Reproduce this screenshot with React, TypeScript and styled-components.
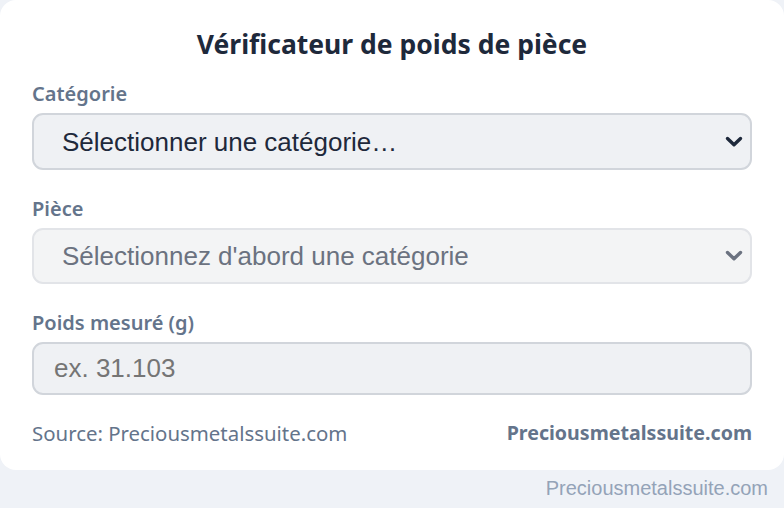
import styled, { createGlobalStyle } from 'styled-components';

const GlobalStyle = createGlobalStyle`
  html, body {
    margin: 0;
    padding: 0;
    background: #eff2f7;
  }
  * {
    box-sizing: border-box;
  }
`;

const Chevron: React.FC<{ muted?: boolean }> = ({ muted }) => (
  <ChevronIcon viewBox='0 0 18 12' width={18} height={12}>
    <path
      d='M2.5 2.5 L9 8.8 L15.5 2.5'
      fill='none'
      stroke={muted ? '#6b7280' : '#1e293b'}
      strokeWidth={3.4}
      strokeLinecap='round'
      strokeLinejoin='round'
    />
  </ChevronIcon>
);

const App: React.FC = () => {
  return (
    <>
      <GlobalStyle />
      <Page>
        <Card>
          <Title>Vérificateur de poids de pièce</Title>
          <Field>
            <Label>Catégorie</Label>
            <SelectWrap>
              <Select defaultValue=''>
                <option value=''>Sélectionner une catégorie…</option>
              </Select>
              <Chevron />
            </SelectWrap>
          </Field>
          <Field>
            <Label>Pièce</Label>
            <SelectWrap>
              <Select disabled defaultValue=''>
                <option value=''>Sélectionnez d'abord une catégorie</option>
              </Select>
              <Chevron muted />
            </SelectWrap>
          </Field>
          <Field>
            <Label>Poids mesuré (g)</Label>
            <Input type='text' placeholder='ex. 31.103' />
          </Field>
          <Footer>
            <Source>Source: Preciousmetalssuite.com</Source>
            <Brand>Preciousmetalssuite.com</Brand>
          </Footer>
        </Card>
        <Credit>Preciousmetalssuite.com</Credit>
      </Page>
    </>
  );
};

export default App;

const Page = styled.div`
  width: 784px;
  min-height: 508px;
  display: flex;
  flex-direction: column;
`;

const Card = styled.div`
  background: #ffffff;
  border-radius: 16px;
  padding: 28px 32px 25px;
  display: flex;
  flex-direction: column;
  gap: 26px;
`;

const Title = styled.h1`
  margin: 0 0 -4px;
  font-family: 'Noto Sans', sans-serif;
  font-weight: 700;
  font-size: 26.5px;
  line-height: 32px;
  color: #1e293b;
  text-align: center;
`;

const Field = styled.div`
  display: flex;
  flex-direction: column;
  gap: 7px;

  & + & {
    margin-top: 1px;
  }
`;

const Label = styled.label`
  font-family: 'Noto Sans', sans-serif;
  font-weight: 600;
  font-size: 20px;
  line-height: 24px;
  color: #64748b;
`;

const SelectWrap = styled.div`
  position: relative;
  display: flex;
`;

const Select = styled.select`
  appearance: none;
  width: 100%;
  height: 57px;
  padding: 0 48px 0 28px;
  border: 2px solid #d1d5db;
  border-radius: 11px;
  background: #eff1f4;
  font-family: 'Liberation Sans', Arial, sans-serif;
  font-size: 26px;
  color: #1e293b;
  outline: none;

  &:disabled {
    height: 56px;
    background: #f3f4f5;
    border-color: #e2e4e8;
    color: #6b7280;
    opacity: 1;
  }
`;

const ChevronIcon = styled.svg`
  position: absolute;
  right: 8px;
  top: 50%;
  transform: translate(-1px, -50%);
  pointer-events: none;
`;

const Input = styled.input`
  width: 100%;
  height: 53px;
  padding: 0 20px;
  border: 2px solid #d1d5db;
  border-radius: 11px;
  background: #eff1f4;
  font-family: 'Liberation Sans', Arial, sans-serif;
  font-size: 26px;
  color: #1e293b;
  outline: none;

  &::placeholder {
    color: #757575;
  }
`;

const Footer = styled.div`
  display: flex;
  justify-content: space-between;
  align-items: center;
  font-family: 'Noto Sans', sans-serif;
  line-height: 24px;
  color: #64748b;
`;

const Source = styled.span`
  font-size: 20.4px;
  font-weight: 400;
`;

const Brand = styled.span`
  font-size: 19.6px;
  font-weight: 700;
`;

const Credit = styled.div`
  align-self: flex-end;
  padding: 8px 16px 0 0;
  font-family: 'Liberation Sans', Arial, sans-serif;
  font-size: 20px;
  line-height: 20px;
  color: #94a3b8;
`;
